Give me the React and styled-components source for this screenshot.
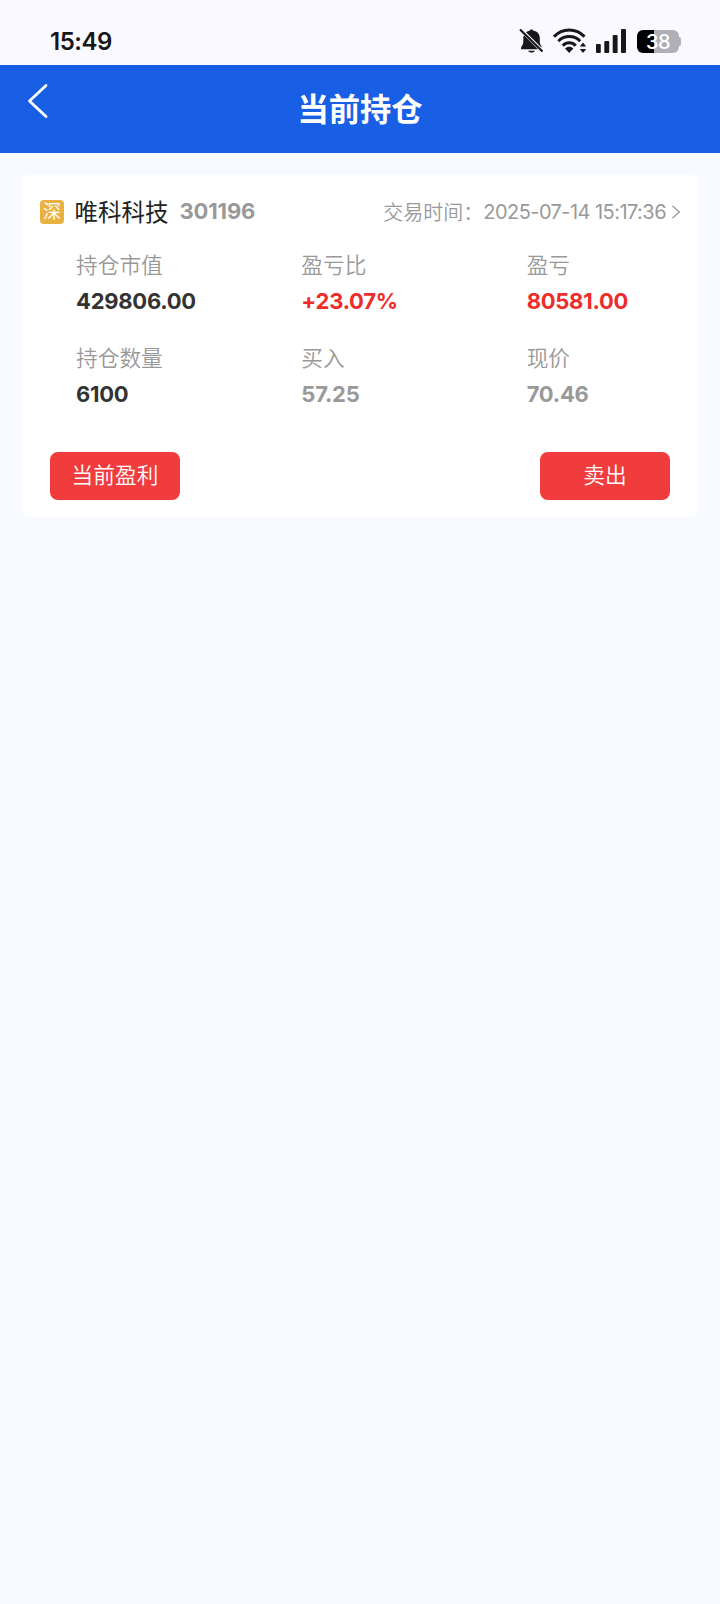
import React from 'react';
import styled, { createGlobalStyle } from 'styled-components';

const GlobalStyle = createGlobalStyle`
  * {
    box-sizing: border-box;
  }

  body {
    margin: 0;
    background: #f7faff;
    font-family: 'Inter', 'Noto Sans CJK SC', sans-serif;
  }
`;

const Page = styled.div`
  width: 100%;
  min-height: 100vh;
  background: #f7faff;
`;

const StatusBar = styled.div`
  display: flex;
  justify-content: space-between;
  height: 65px;
  padding: 28px 39px 0 50px;
  background: #f9f9ff;
`;

const Clock = styled.div`
  font-size: 24px;
  font-weight: 600;
  line-height: 27px;
  letter-spacing: -0.5px;
  color: #17171a;
`;

const StatusIcons = styled.div`
  display: flex;
  align-items: flex-start;

  svg {
    display: block;
  }
`;

const BellIcon = styled.svg`
  margin-right: 9px;
`;

const WifiIcon = styled.svg`
  margin-right: 9px;
`;

const SignalIcon = styled.svg`
  margin-right: 11px;
`;

const Battery = styled.div`
  display: flex;
  align-items: center;
  margin-top: 2px;
`;

const BatteryBody = styled.div`
  width: 42px;
  height: 23px;
  border-radius: 6px;
  background: linear-gradient(to right, #000 17px, #b0afb5 17px);
  color: #fff;
  font-size: 20px;
  font-weight: 500;
  line-height: 25px;
  letter-spacing: -0.5px;
  text-align: center;
`;

const BatteryTip = styled.div`
  width: 2px;
  height: 9px;
  border-radius: 0 2px 2px 0;
  background: #b0afb5;
`;

const Header = styled.header`
  display: grid;
  grid-template-columns: 60px 1fr 60px;
  height: 88px;
  background: #195fe6;
`;

const BackButton = styled.button`
  display: flex;
  align-items: flex-start;
  padding: 18px 0 0 26px;
  border: none;
  background: none;
  cursor: pointer;
`;

const Title = styled.h1`
  margin: 0;
  font-size: 31.3px;
  font-weight: 700;
  line-height: 90px;
  text-align: center;
  color: #fff;
`;

const Card = styled.section`
  height: 342px;
  margin: 22px 22px 0;
  border-radius: 6px;
  background: #fff;
`;

const CardHeader = styled.div`
  display: flex;
  align-items: center;
  height: 73px;
  padding: 1px 17px 0 18px;
`;

const Market = styled.span`
  width: 24px;
  height: 24px;
  border-radius: 4px;
  background: #e9b13f;
  color: #fff;
  font-size: 18px;
  line-height: 24px;
  text-align: center;
`;

const StockName = styled.span`
  margin-left: 10.5px;
  padding-top: 1px;
  font-size: 23.5px;
  line-height: 32px;
  color: #222;
`;

const StockCode = styled.span`
  margin-left: 11px;
  padding-bottom: 2px;
  font-size: 22px;
  font-weight: 700;
  line-height: 30px;
  letter-spacing: -0.15px;
  color: #999;
`;

const TradeTime = styled.span`
  display: flex;
  align-items: center;
  margin-left: auto;
  font-size: 20px;
  font-weight: 350;
  line-height: 30px;
  color: #999;
`;

const TimeLabel = styled.span`
  padding-top: 1px;
`;

const Timestamp = styled.span`
  margin-right: 5px;
  font-weight: 400;
  letter-spacing: -0.55px;
`;

const Stats = styled.div`
  display: grid;
  grid-template-columns: repeat(3, 1fr);
  row-gap: 21px;
`;

const Stat = styled.div`
  padding-left: 54px;
`;

const StatLabel = styled.div`
  font-size: 21.7px;
  font-weight: 350;
  line-height: 34px;
  color: #999;
`;

const tones = {
  dark: '#333',
  red: '#ee2c2c',
  muted: '#999',
};

const StatValue = styled.div`
  font-size: 22px;
  font-weight: 700;
  line-height: 38px;
  letter-spacing: -0.25px;
  color: ${({ $tone }) => tones[$tone]};
`;

const Actions = styled.div`
  display: flex;
  justify-content: space-between;
  padding: 39px 28px 0;
`;

const ActionButton = styled.button`
  width: 130px;
  height: 48px;
  padding: 0 0 5px;
  border: none;
  border-radius: 8px;
  background: #f03c3c;
  color: #fff;
  font-family: inherit;
  font-size: 21.7px;
  font-weight: 350;
  cursor: pointer;
`;

const stats = [
  { label: '持仓市值', value: '429806.00', tone: 'dark' },
  { label: '盈亏比', value: '+23.07%', tone: 'red' },
  { label: '盈亏', value: '80581.00', tone: 'red' },
  { label: '持仓数量', value: '6100', tone: 'dark' },
  { label: '买入', value: '57.25', tone: 'muted' },
  { label: '现价', value: '70.46', tone: 'muted' },
];

function App() {
  return (
    <Page>
      <GlobalStyle />
      <StatusBar>
        <Clock>15:49</Clock>
        <StatusIcons>
          <BellIcon width="25" height="26" viewBox="0 0 25 26" fill="#17171a">
            <path d="M7 4.200C8 3.400 9.400 3 10.600 2.800C10.900 1.900 11.600 1.400 12.500 1.400S14.100 1.900 14.400 2.800C18.600 3.400 20.800 6.400 20.800 10v4.500c0 1.800 1.700 2.800 1.900 5.200Z" />
            <path d="M4.900 7.200C4.500 8 4.300 9 4.300 10v4.500c0 2.300-2.300 3.500-2.300 5.700 0 .7.400 1 1 1H19Z" />
            <path d="M9 22.800h7c-.6 1.200-1.900 1.800-3.500 1.800s-2.900-.6-3.500-1.800Z" />
            <path d="M1 1.500L23.500 23.500" stroke="#17171a" strokeWidth="2.200" />
          </BellIcon>
          <WifiIcon width="34" height="26" viewBox="0 0 34 26" fill="none" stroke="#17171a" strokeWidth="3">
            <path d="M1 8.600C9.500-.2 23-.2 31.500 8.600" />
            <path d="M5.300 13.200C11.300 7 21.200 7 27.200 13.200" />
            <path d="M9.800 17.700C13.500 13.900 19 13.900 22.700 17.700" />
            <path d="M12 20.500c2.400-2.300 6-2.300 8.400 0l-4.200 4.500Z" fill="#17171a" stroke="none" />
            <path d="M26.800 18.500l3.200-3.900 3.200 3.900ZM26.800 21l3.200 3.900 3.200-3.900Z" fill="#17171a" stroke="none" />
          </WifiIcon>
          <SignalIcon width="30" height="26" viewBox="0 0 30 26" fill="#17171a">
            <rect x="0" y="16" width="4.800" height="9" rx="1" />
            <rect x="8.300" y="13" width="4.900" height="12" rx="1" />
            <rect x="16.700" y="7" width="4.900" height="18" rx="1" />
            <rect x="25" y="1" width="5" height="24" rx="1" />
          </SignalIcon>
          <Battery>
            <BatteryBody>38</BatteryBody>
            <BatteryTip />
          </Battery>
        </StatusIcons>
      </StatusBar>

      <Header>
        <BackButton aria-label="返回">
          <svg width="24" height="36" viewBox="0 0 24 36" fill="none" stroke="#fff" strokeWidth="2.800" strokeLinecap="round" strokeLinejoin="round">
            <path d="M20 2.500L3.500 18L20 33.500" />
          </svg>
        </BackButton>
        <Title>当前持仓</Title>
      </Header>

      <Card>
        <CardHeader>
          <Market>深</Market>
          <StockName>唯科科技</StockName>
          <StockCode>301196</StockCode>
          <TradeTime>
            <TimeLabel>交易时间：</TimeLabel>
            <Timestamp>2025-07-14 15:17:36</Timestamp>
            <svg width="10" height="14" viewBox="0 0 10 14" fill="none" stroke="#999" strokeWidth="1.300">
              <path d="M1.500 1L8.500 7L1.500 13" />
            </svg>
          </TradeTime>
        </CardHeader>
        <Stats>
          {stats.map((item) => (
            <Stat key={item.label}>
              <StatLabel>{item.label}</StatLabel>
              <StatValue $tone={item.tone}>{item.value}</StatValue>
            </Stat>
          ))}
        </Stats>
        <Actions>
          <ActionButton>当前盈利</ActionButton>
          <ActionButton>卖出</ActionButton>
        </Actions>
      </Card>
    </Page>
  );
}

export default App;
